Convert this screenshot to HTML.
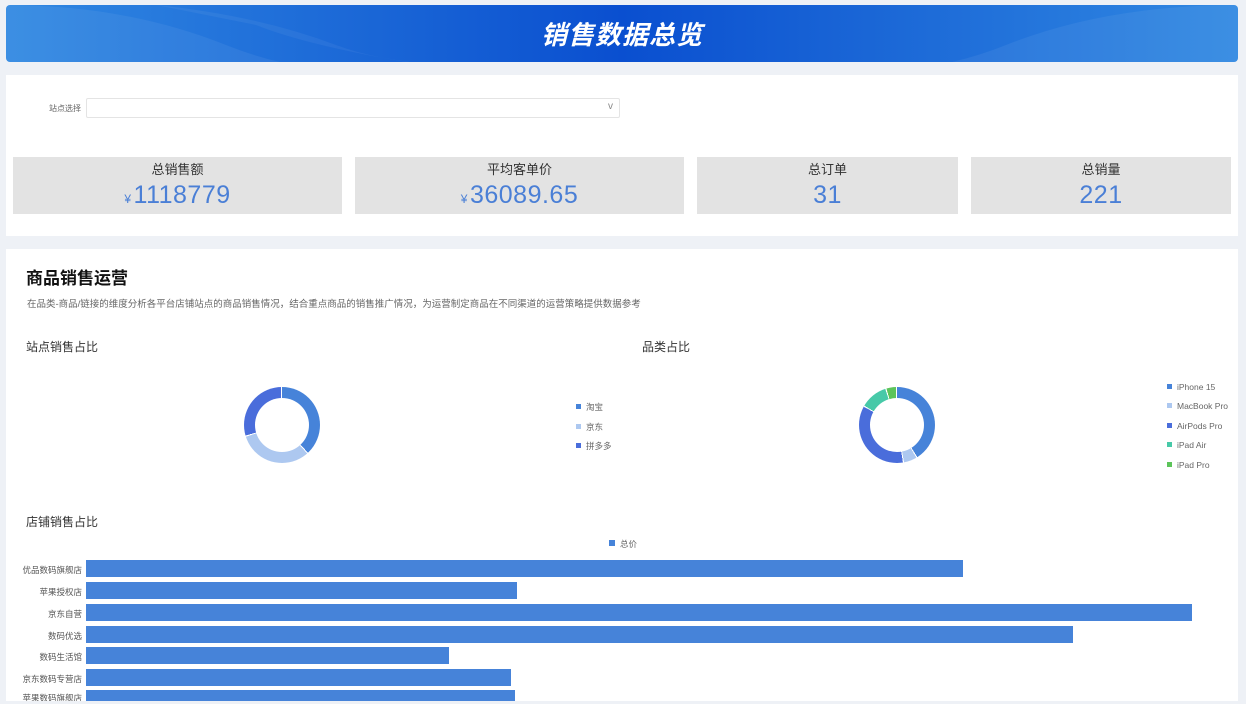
<!DOCTYPE html>
<html><head><meta charset="utf-8"><style>
*{margin:0;padding:0;box-sizing:border-box}
html,body{width:1246px;height:704px;overflow:hidden}
body{background:#eef1f6;font-family:"Liberation Sans","Noto Sans CJK SC",sans-serif;position:relative}
.hdr{position:absolute;left:6px;top:5px;width:1232px;height:57px;border-radius:4px;background:linear-gradient(90deg,#3088e2 0%,#1a66d6 30%,#0a4fd0 50%,#1a66d6 70%,#3088e2 100%);overflow:hidden}
.hdr span{position:absolute;left:0;right:0;top:10px;text-align:center;color:#fff;font-size:26px;font-weight:bold;font-style:italic;letter-spacing:1px}
.p1{position:absolute;left:6px;top:75px;width:1232px;height:161px;background:#fff}
.p2{position:absolute;left:6px;top:249px;width:1232px;height:452px;background:#fff}
.lbl{position:absolute;font-size:8px;color:#666}
.sel{position:absolute;left:86px;top:98px;width:534px;height:20px;border:1px solid #e4e4e4;border-radius:2px;background:#fff}
.card{position:absolute;top:157px;height:57px;background:#e3e3e3;text-align:center}
.card .t{font-size:13px;color:#333;margin-top:2px}
.card .v{font-size:25px;color:#4a7fd6;margin-top:3px;letter-spacing:0.5px}
.card .v small{font-size:12px;margin-right:2px}
.abs{position:absolute}
.donut{position:absolute;width:76px;height:76px;border-radius:50%}
.donut:after{content:"";position:absolute;left:11px;top:11px;width:54px;height:54px;border-radius:50%;background:#fff}
.lg{position:absolute;font-size:8.5px;color:#666}
.lg i{display:inline-block;width:5px;height:5px;margin-right:5px;vertical-align:1px}
.bar{position:absolute;left:86px;height:17px;background:#4683d9}
.bl{position:absolute;right:1164px;font-size:8.5px;color:#555;white-space:nowrap}
</style></head><body>
<div class="hdr">
<svg width="1232" height="57" style="position:absolute;left:0;top:0"><path d="M0 0 Q120 0 220 40 T420 57 L0 57Z" fill="#fff" opacity=".06"/><path d="M150 0 Q250 10 330 40 T560 57 L400 57 Q300 40 250 20Z" fill="#fff" opacity=".05"/><path d="M1232 0 Q1100 0 1000 40 T800 57 L1232 57Z" fill="#fff" opacity=".06"/></svg>
<span>销售数据总览</span></div>
<div class="p1"></div>
<div class="lbl" style="left:49px;top:103px">站点选择</div>
<div class="sel"><span style="position:absolute;right:6px;top:2px;font-size:10px;color:#888">v</span></div>
<div class="card" style="left:13px;width:329px"><div class="t">总销售额</div><div class="v"><small>¥</small>1118779</div></div>
<div class="card" style="left:355px;width:329px"><div class="t">平均客单价</div><div class="v"><small>¥</small>36089.65</div></div>
<div class="card" style="left:697px;width:261px"><div class="t">总订单</div><div class="v">31</div></div>
<div class="card" style="left:971px;width:260px"><div class="t">总销量</div><div class="v">221</div></div>
<div class="p2"></div>
<div class="abs" style="left:26px;top:264px;font-size:17px;font-weight:bold;color:#111">商品销售运营</div>
<div class="abs" style="left:27px;top:296px;font-size:9.5px;color:#666">在品类-商品/链接的维度分析各平台店铺站点的商品销售情况，结合重点商品的销售推广情况，为运营制定商品在不同渠道的运营策略提供数据参考</div>
<div class="abs" style="left:26px;top:338px;font-size:12px;color:#333">站点销售占比</div>
<div class="abs" style="left:642px;top:338px;font-size:12px;color:#333">品类占比</div>
<div class="donut" style="left:244px;top:387px;background:conic-gradient(#4683d9 0 38%,#fff 38% 38.5%,#adc8f0 38.5% 70%,#fff 70% 70.5%,#4a6ddb 70.5% 99.5%,#fff 99.5%)"></div>
<div class="lg" style="left:576px;top:401px"><i style="background:#4683d9"></i>淘宝</div>
<div class="lg" style="left:576px;top:421px"><i style="background:#adc8f0"></i>京东</div>
<div class="lg" style="left:576px;top:440px"><i style="background:#4a6ddb"></i>拼多多</div>
<div class="donut" style="left:859px;top:387px;background:conic-gradient(#4683d9 0 41%,#fff 41% 41.5%,#adc8f0 41.5% 47%,#fff 47% 47.5%,#4a6ddb 47.5% 83%,#fff 83% 83.5%,#47c9a8 83.5% 95%,#fff 95% 95.5%,#5cc45a 95.5% 99.5%,#fff 99.5%)"></div>
<div class="lg" style="left:1167px;top:382px"><i style="background:#4683d9"></i>iPhone 15</div>
<div class="lg" style="left:1167px;top:401px"><i style="background:#adc8f0"></i>MacBook Pro</div>
<div class="lg" style="left:1167px;top:421px"><i style="background:#4a6ddb"></i>AirPods Pro</div>
<div class="lg" style="left:1167px;top:440px"><i style="background:#47c9a8"></i>iPad Air</div>
<div class="lg" style="left:1167px;top:460px"><i style="background:#5cc45a"></i>iPad Pro</div>
<div class="abs" style="left:26px;top:513px;font-size:12px;color:#333">店铺销售占比</div>
<div class="lg" style="left:609px;top:538px"><i style="background:#4683d9;width:6px;height:6px"></i>总价</div>
<div class="bar" style="top:560px;width:877px"></div><div class="bl" style="top:564px">优品数码旗舰店</div>
<div class="bar" style="top:582px;width:431px"></div><div class="bl" style="top:586px">苹果授权店</div>
<div class="bar" style="top:604px;width:1106px"></div><div class="bl" style="top:608px">京东自营</div>
<div class="bar" style="top:626px;width:987px"></div><div class="bl" style="top:630px">数码优选</div>
<div class="bar" style="top:647px;width:363px"></div><div class="bl" style="top:651px">数码生活馆</div>
<div class="bar" style="top:669px;width:425px"></div><div class="bl" style="top:673px">京东数码专营店</div>
<div class="bar" style="top:690px;width:429px;height:11px"></div><div class="bl" style="top:692px;height:9px;overflow:hidden">苹果数码旗舰店</div>
</body></html>
